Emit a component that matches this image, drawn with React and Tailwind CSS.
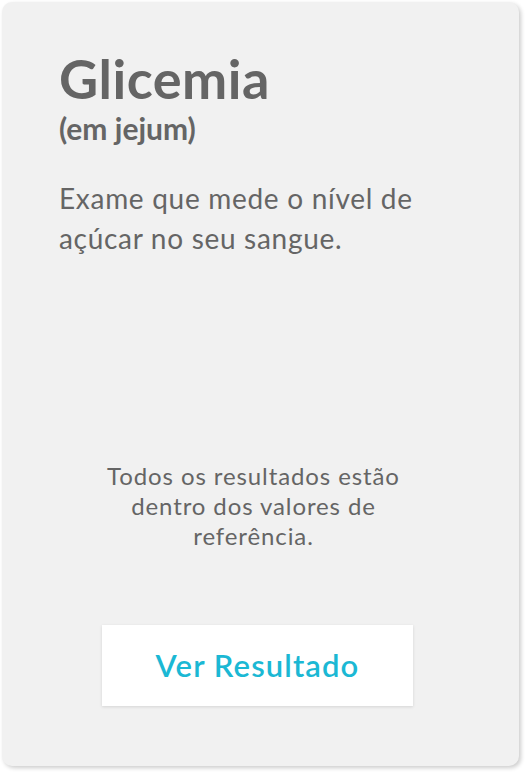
export default function App() {
    return (
        <div className="w-[526px] h-[774px] bg-white p-[2px] pr-[7px] pb-[8px]" style={{ fontFamily: 'Lato, "Noto Sans", sans-serif' }}>
            <div className="h-full w-full bg-[#f1f1f1] rounded-[10px] shadow-[2px_2px_4px_rgba(0,0,0,0.2)] flex flex-col pl-[57px] pr-[71px] pt-[47px] pb-[60px] text-[#656565]">
                <h1 className="text-[54px] font-bold leading-[60px] tracking-[0.5px]">Glicemia</h1>
                <h2 className="text-[30px] font-bold leading-[36px] mt-[1px]">(em jejum)</h2>
                <p className="text-[28px] leading-[40px] mt-[32px] tracking-[0.7px]">
                    Exame que mede o nível de<br />açúcar no seu sangue.
                </p>

                <div className="flex-1" />

                <p className="text-[24px] leading-[30px] text-center tracking-[0.9px]">
                    Todos os resultados estão<br />dentro dos valores de<br />referência.
                </p>

                <div className="mt-[74px] flex">
                    <button className="ml-[43px] w-[311px] h-[81px] bg-white shadow-[0_1px_3px_rgba(0,0,0,0.12)] text-[#1bb8d4] text-[31px] font-semibold tracking-[1.1px]">
                        Ver Resultado
                    </button>
                </div>
            </div>
        </div>
    );
}
